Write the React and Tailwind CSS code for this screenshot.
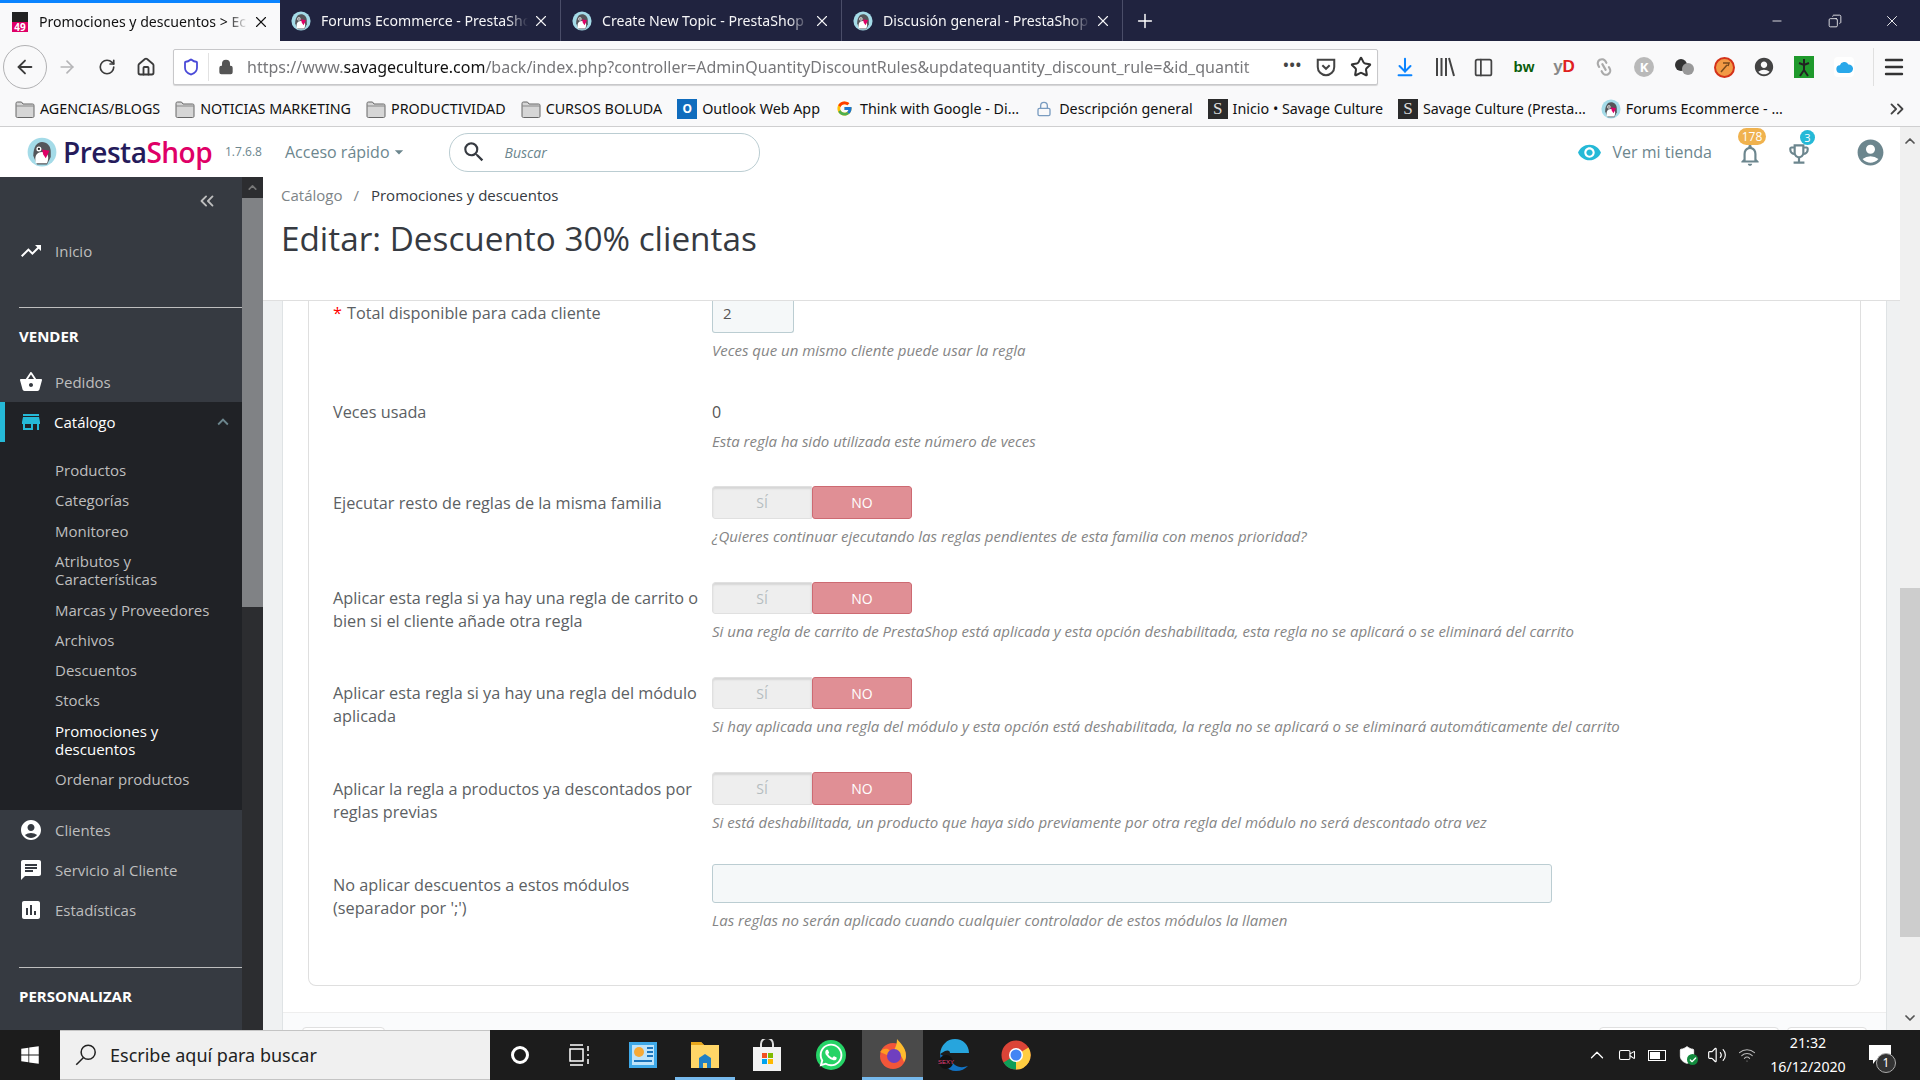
import React from "react";
import {
  ArrowLeft, ArrowRight, RotateCw, Home, Lock, X, Plus, Minus, Copy, Star, ArrowDownToLine,
  PanelLeft, Menu, ChevronsRight, ChevronsLeft, ChevronUp, ChevronDown, Link2, Volume2, Wifi, Video, Shield, Check,
} from "lucide-react";
import {
  MdTrendingUp, MdShoppingBasket, MdStore, MdAccountCircle, MdChat, MdAssessment,
  MdVisibility, MdSearch, MdArrowDropDown, MdNotificationsNone, MdOutlineEmojiEvents, MdExpandLess,
} from "react-icons/md";
import { FcGoogle } from "react-icons/fc";
import { FaWhatsapp, FaWindows } from "react-icons/fa";

const Puffin = ({ size = 20 }) => (
  <svg width={size} height={size} viewBox="0 0 24 24" className="shrink-0">
    <circle cx="12" cy="12" r="11.5" fill="#a4dbe8" />
    <path d="M5 15c0-7 3-11 7-11s7 3 7 8v4l-3 6H8z" fill="#54565a" />
    <path d="M7 21c-1-5 0-9 5-9s6 4 4 9z" fill="#fff" />
    <path d="M12 10l6 1-3 6-2-3z" fill="#df0067" />
    <circle cx="9.5" cy="9.5" r="2" fill="#fff" />
    <circle cx="9.5" cy="9.5" r="0.9" fill="#222" />
  </svg>
);

const Tab = ({ title, active, icon }) => (
  <div
    className={
      active
        ? "w-[280px] h-[41px] shrink-0 bg-[#f9f9fa] border-t-[3px] border-[#0a84ff] flex items-center pl-[12px] pr-[10px] text-[#111]"
        : "w-[281px] h-[41px] shrink-0 border-r border-[#4a4d68] flex items-center pl-[11px] pr-[10px] text-[#f5f5f7]"
    }
  >
    {icon}
    <span className={`${active ? "ml-[11px]" : "ml-[10px]"} flex-1 whitespace-nowrap overflow-hidden text-[14.1px] [mask-image:linear-gradient(to_right,black_90%,transparent)]`}>
      {title}
    </span>
    <X size={18} strokeWidth={1.5} className="ml-[4px] shrink-0" />
  </div>
);

const SavageIcon = () => (
  <span className="w-[20px] h-[20px] bg-[#2b2b2b] text-[#ddd] font-['Liberation_Serif',serif] text-[17px] leading-[20px] text-center shrink-0">S</span>
);

const Folder = () => (
  <svg width="20" height="18" viewBox="0 0 20 18" className="shrink-0">
    <path d="M1 3.5C1 2.5 1.5 2 2.5 2h4L8 4h9.5c1 0 1.5.5 1.5 1.5V16c0 1-.5 1.5-1.5 1.5h-15C1.500 17.500 1 17 1 16z" fill="#d6d6d6" stroke="#666" />
    <path d="M1 6h18" stroke="#888" />
  </svg>
);

const Bookmark = ({ icon, label }) => (
  <div className="flex items-center gap-[5px] text-[14.3px] text-[#111] whitespace-nowrap">
    <span className="w-[20px] flex justify-center shrink-0">{icon}</span>
    <span>{label}</span>
  </div>
);

const Toolbar = () => (
  <div className="h-[50px] shrink-0 bg-[#f9f9fa] flex items-center pt-[2px]">
    <div className="w-[44px] h-[44px] ml-[3px] rounded-full border border-[#b1b1b3] bg-[#f9f9fa] flex items-center justify-center shrink-0">
      <ArrowLeft size={22} className="text-[#3b3b3b]" strokeWidth={2} />
    </div>
    <div className="w-[40px] flex justify-center shrink-0">
      <ArrowRight size={20} className="text-[#b5b5b7]" />
    </div>
    <div className="w-[40px] flex justify-center shrink-0">
      <RotateCw size={18} className="text-[#3b3b3b]" strokeWidth={2.2} />
    </div>
    <div className="w-[38px] flex justify-center shrink-0">
      <Home size={20} className="text-[#3b3b3b]" strokeWidth={2.2} />
    </div>
    <div className="w-[1205px] ml-[8px] h-[36px] shrink-0 bg-white border border-[#c8c8ca] rounded-[2px] flex items-center shadow-[0_1px_1px_rgba(0,0,0,0.15)]">
      <div className="w-[35px] h-[28px] border-r border-[#e2e2e2] flex items-center justify-center shrink-0">
        <Shield size={18} className="text-[#4a4ad8]" strokeWidth={2.4} />
      </div>
      <Lock size={16} className="ml-[9px] text-[#555] shrink-0" fill="#555" />
      <div className="ml-[13px] flex-1 whitespace-nowrap overflow-hidden text-[16px] text-[#77777a] [mask-image:linear-gradient(to_right,black_97%,transparent)]">
        https://www.<span className="text-[#111]">savageculture.com</span>/back/index.php?controller=AdminQuantityDiscountRules&updatequantity_discount_rule=&id_quantit
      </div>
      <span className="ml-[8px] text-[#444] text-[14px] font-bold tracking-[1px] shrink-0 -mt-[6px]">•••</span>
      <svg width="22" height="22" viewBox="0 0 24 24" className="ml-[13px] shrink-0" fill="none" stroke="#444" strokeWidth="2.2">
        <path d="M3 4h18v8a9 9 0 0 1-18 0z" />
        <path d="M8 10l4 4 4-4" />
      </svg>
      <Star size={22} className="ml-[13px] mr-[5px] text-[#333] shrink-0" strokeWidth={2.2} />
    </div>
    <div className="flex items-center ml-[15px]">
      <ArrowDownToLine size={22} className="text-[#0a84ff] w-[24px]" strokeWidth={2.2} />
      <span className="w-[40px] ml-[8px] flex justify-center">
        <svg width="22" height="20" viewBox="0 0 22 20" stroke="#444" strokeWidth="2" fill="none"><path d="M3 1v18M7.500 1v18M12 1v18M15 1l5 18" /></svg>
      </span>
      <span className="w-[42px] -ml-[3px] flex justify-center"><PanelLeft size={21} className="text-[#444]" strokeWidth={2} /></span>
      <span className="w-[40px] text-center font-bold text-[#0b5d0b] text-[15px] font-['Liberation_Sans',sans-serif]">bw</span>
      <span className="w-[40px] text-center font-bold text-[17px] font-['Liberation_Sans',sans-serif]"><span className="text-[#888]">y</span><span className="text-[#e02020]">D</span></span>
      <span className="w-[40px] flex justify-center"><Link2 size={20} className="text-[#aaa] rotate-[60deg]" strokeWidth={2.6} /></span>
      <span className="w-[40px] flex justify-center"><span className="w-[20px] h-[20px] rounded-full bg-[#b9b9b9] text-white font-bold text-[13px] leading-[20px] text-center">K</span></span>
      <span className="w-[40px] flex justify-center">
        <svg width="22" height="22" viewBox="0 0 22 22"><circle cx="8" cy="9" r="6" fill="#333" /><circle cx="15" cy="13" r="6" fill="#999" /></svg>
      </span>
      <span className="w-[40px] flex justify-center">
        <span className="w-[21px] h-[21px] rounded-full bg-[#f29a45] border-2 border-[#d4321a] flex items-center justify-center">
          <svg width="13" height="13" viewBox="0 0 13 13" stroke="#7a4a1c" strokeWidth="1.5" fill="none"><path d="M3 11l6-7M5 2h6l-1 3" /></svg>
        </span>
      </span>
      <span className="w-[40px] flex justify-center"><MdAccountCircle size={22} className="text-[#444]" /></span>
      <span className="w-[40px] flex justify-center">
        <svg width="20" height="22" viewBox="0 0 20 22"><rect width="20" height="22" fill="#1f9a2c" /><path d="M10 3v12M5 7l5 2 5-2M6 20l4-6 4 6" stroke="#222" strokeWidth="2" fill="none" /></svg>
      </span>
      <span className="w-[40px] flex justify-center">
        <span className="w-[20px] h-[20px] bg-white rounded-[4px] flex items-center justify-center">
          <svg width="17" height="11" viewBox="0 0 22 14"><path d="M6 14a5 5 0 0 1-1-10 6 6 0 0 1 11-1 5.500 5.500 0 0 1 1 11z" fill="#29a8ea" /></svg>
        </span>
      </span>
      <span className="w-[40px] ml-[9px] border-l border-[#e0e0e0] h-[38px] flex items-center justify-center"><Menu size={24} className="text-[#333]" strokeWidth={2.4} /></span>
    </div>
  </div>
);

const Bookmarks = () => (
  <div className="h-[36px] shrink-0 bg-[#f9f9fa] border-b border-[#cfcfd0] flex items-center pl-[15px] pr-[12px]">
    <div className="flex items-center gap-[15px] flex-1">
      <Bookmark icon={<Folder />} label="AGENCIAS/BLOGS" />
      <Bookmark icon={<Folder />} label="NOTICIAS MARKETING" />
      <Bookmark icon={<Folder />} label="PRODUCTIVIDAD" />
      <Bookmark icon={<Folder />} label="CURSOS BOLUDA" />
      <Bookmark
        icon={<span className="w-[20px] h-[20px] bg-[#0f6cbd] text-white text-[12px] font-bold leading-[20px] text-center">O</span>}
        label="Outlook Web App"
      />
      <Bookmark icon={<FcGoogle size={17} />} label="Think with Google - Di..." />
      <Bookmark icon={<Lock size={16} className="text-[#7a9cc0]" />} label="Descripción general" />
      <Bookmark icon={<SavageIcon />} label="Inicio • Savage Culture" />
      <Bookmark icon={<SavageIcon />} label="Savage Culture (Presta..." />
      <Bookmark icon={<Puffin size={20} />} label="Forums Ecommerce - ..." />
    </div>
    <ChevronsRight size={22} className="text-[#444]" strokeWidth={2} />
  </div>
);

const PsHeader = () => (
  <div className="h-[50px] shrink-0 bg-white flex items-center font-['Open_Sans',sans-serif] pl-[27px]">
    <Puffin size={30} />
    <span className="ml-[6px] text-[28px] font-semibold tracking-[-0.5px] leading-none font-['Open_Sans',sans-serif] w-[155px] whitespace-nowrap">
      <span className="text-[#251b5b]">Presta</span><span className="text-[#df0067]">Shop</span>
    </span>
    <span className="ml-[7px] w-[60px] text-[12px] text-[#6c868e]">1.7.6.8</span>
    <span className="text-[16px] text-[#6c868e] whitespace-nowrap">Acceso rápido</span>
    <MdArrowDropDown size={20} className="text-[#6c868e] -ml-[1px]" />
    <div className="ml-[40px] w-[311px] h-[39px] border border-[#bbcdd2] rounded-[19px] flex items-center pl-[11px]">
      <MdSearch size={26} className="text-[#363a41]" />
      <span className="ml-[18px] text-[14px] italic text-[#6c868e]">Buscar</span>
    </div>
    <div className="flex-1" />
    <MdVisibility size={25} className="text-[#25b9d7]" />
    <span className="ml-[11px] text-[16px] text-[#6c868e] whitespace-nowrap">Ver mi tienda</span>
    <div className="relative ml-[23px] w-[30px] flex justify-center">
      <MdNotificationsNone size={26} className="text-[#6c868e] mt-[6px]" />
      <span className="absolute -top-[8px] left-[3px] w-[28px] h-[17px] rounded-full bg-[#f0b24e] text-white text-[12px] leading-[17px] text-center">178</span>
    </div>
    <div className="relative ml-[19px] w-[30px] flex justify-center">
      <MdOutlineEmojiEvents size={26} className="text-[#6c868e] mt-[4px]" />
      <span className="absolute -top-[7px] left-[16px] w-[15px] h-[15px] rounded-full bg-[#25b9d7] text-white text-[11px] leading-[15px] text-center">3</span>
    </div>
    <MdAccountCircle size={31} className="ml-[41px] text-[#6c868e]" />
    <div className="w-[20px] ml-[14px] h-[50px] bg-[#f0f0f0] shrink-0 flex justify-center pt-[6px]">
      <ChevronUp size={16} className="text-[#555]" strokeWidth={2.6} />
    </div>
  </div>
);

const NavItem = ({ Icon, label, h = "h-[40px]" }) => (
  <div className={`${h} flex items-center pl-[19px]`}>
    <Icon size={24} className="text-white shrink-0" />
    <span className="ml-[12px] text-[15px] text-[#bebebe]">{label}</span>
  </div>
);

const SubItem = ({ children, active, h = "h-[30.3px]" }) => (
  <div className={`${h} flex items-center pl-[55px] text-[15px] leading-[18px] ${active ? "text-white" : "text-[#bebebe]"}`}>
    <span>{children}</span>
  </div>
);

const Sidebar = () => (
  <div className="w-[263px] shrink-0 flex bg-[#363a41] font-['Open_Sans',sans-serif] overflow-hidden">
    <div className="w-[242px] shrink-0 flex flex-col">
      <div className="h-[49px] flex justify-end items-center pr-[24px] pb-[1px]">
        <ChevronsLeft size={22} className="text-[#bebebe]" strokeWidth={2} />
      </div>
      <div className="h-[50px] flex items-center pl-[19px]">
        <MdTrendingUp size={24} className="text-white shrink-0" />
        <span className="ml-[12px] text-[15px] text-[#bebebe]">Inicio</span>
      </div>
      <div className="mt-[31px] ml-[19px] h-px bg-[#bebebe] shrink-0" />
      <div className="h-[30px] mt-[13px] pl-[19px] flex items-center text-[15px] font-bold text-white">VENDER</div>
      <div className="mt-[11px]"><NavItem Icon={MdShoppingBasket} label="Pedidos" h="h-[40px]" /></div>
      <div className="bg-[#202226] h-[408px] shrink-0 flex flex-col">
        <div className="h-[40px] border-l-[5px] border-[#25b9d7] flex items-center pl-[14px] shrink-0">
          <MdStore size={24} className="text-[#25b9d7] shrink-0" />
          <span className="ml-[11px] text-[15px] text-white flex-1">Catálogo</span>
          <MdExpandLess size={22} className="text-[#6c868e] mr-[8px]" />
        </div>
        <div className="h-[13px] shrink-0" />
        <SubItem>Productos</SubItem>
        <SubItem>Categorías</SubItem>
        <SubItem>Monitoreo</SubItem>
        <SubItem h="h-[48.5px]">Atributos y<br />Características</SubItem>
        <SubItem>Marcas y Proveedores</SubItem>
        <SubItem>Archivos</SubItem>
        <SubItem>Descuentos</SubItem>
        <SubItem>Stocks</SubItem>
        <SubItem active h="h-[48.5px]">Promociones y<br />descuentos</SubItem>
        <SubItem>Ordenar productos</SubItem>
      </div>
      <NavItem Icon={MdAccountCircle} label="Clientes" />
      <NavItem Icon={MdChat} label="Servicio al Cliente" />
      <NavItem Icon={MdAssessment} label="Estadísticas" />
      <div className="mt-[37px] ml-[19px] h-px bg-[#bebebe] shrink-0" />
      <div className="h-[30px] mt-[13px] pl-[19px] flex items-center text-[15px] font-bold text-white">PERSONALIZAR</div>
    </div>
    <div className="w-[21px] bg-[#2c2d30] flex flex-col shrink-0">
      <div className="h-[21px] flex items-center justify-center"><ChevronUp size={13} className="text-[#777]" strokeWidth={3} /></div>
      <div className="h-[409px] bg-[#808285]" />
    </div>
  </div>
);

const Help = ({ children }) => (
  <div className="mt-[8px] h-[18px] text-[15px] leading-[18px] italic text-[#858585] whitespace-nowrap">
    {children}
  </div>
);

const Toggle = ({ h = "h-[33px]" }) => (
  <div className={`${h} w-[200px] flex text-[14px] rounded-[3px] overflow-hidden`}>
    <div className="w-[100px] bg-[#eeeeee] border border-[#e0e0e0] rounded-l-[3px] text-[#b5bdc0] flex items-center justify-center shadow-[inset_0_2px_2px_rgba(0,0,0,0.1)]">SÍ</div>
    <div className="w-[100px] bg-[#e08f95] border border-[#cd6a72] rounded-[3px] text-white flex items-center justify-center">NO</div>
  </div>
);

const Row = ({ mt, pt = "pt-[5px]", label, children }) => (
  <div className={`flex ${mt}`}>
    <div className={`w-[379px] pr-[5px] shrink-0 text-[16.25px] leading-[23px] text-[#5c5f64] ${pt}`}>{label}</div>
    <div className="flex-1">{children}</div>
  </div>
);

const FormCard = () => (
  <div className="flex-1 min-h-0 flex flex-col bg-[#eff1f2] pl-[19px] pr-[13px] overflow-hidden font-['Open_Sans',sans-serif]">
    <div className="bg-white border-l border-r border-[#dfe3e5] flex-1 flex flex-col">
      <div className="ml-[25px] mr-[25px] bg-white border-b border-l border-r border-[#dfdfdf] rounded-b-[8px] pl-[24px] pb-[56px]">
        <Row
          mt=""
          pt="pt-px"
          label={<><span className="text-[#ff0000] mr-[5px]">*</span>Total disponible para cada cliente</>}
        >
          <div className="w-[82px] h-[32px] bg-[#f5f8f9] border border-t-0 border-[#bbcdd2] rounded-b-[3px] pl-[10px] text-[15px] leading-[24px] text-[#555]">2</div>
          <Help>Veces que un mismo cliente puede usar la regla</Help>
        </Row>
        <Row mt="mt-[41px]" pt="pt-px" label="Veces usada">
          <div className="h-[24px] text-[16px] leading-[24px] text-[#555]">0</div>
          <Help>Esta regla ha sido utilizada este número de veces</Help>
        </Row>
        <Row mt="mt-[36px]" pt="pt-[6px]" label="Ejecutar resto de reglas de la misma familia">
          <Toggle />
          <Help>¿Quieres continuar ejecutando las reglas pendientes de esta familia con menos prioridad?</Help>
        </Row>
        <Row mt="mt-[37px]" label="Aplicar esta regla si ya hay una regla de carrito o bien si el cliente añade otra regla">
          <Toggle h="h-[32px]" />
          <Help>Si una regla de carrito de PrestaShop está aplicada y esta opción deshabilitada, esta regla no se aplicará o se eliminará del carrito</Help>
        </Row>
        <Row mt="mt-[37px]" label="Aplicar esta regla si ya hay una regla del módulo aplicada">
          <Toggle h="h-[32px]" />
          <Help>Si hay aplicada una regla del módulo y esta opción está deshabilitada, la regla no se aplicará o se eliminará automáticamente del carrito</Help>
        </Row>
        <Row mt="mt-[37px]" pt="pt-[6px]" label="Aplicar la regla a productos ya descontados por reglas previas">
          <Toggle />
          <Help>Si está deshabilitada, un producto que haya sido previamente por otra regla del módulo no será descontado otra vez</Help>
        </Row>
        <Row mt="mt-[33px]" pt="pt-[10px]" label="No aplicar descuentos a estos módulos (separador por ';')">
          <div className="w-[840px] h-[39px] bg-[#f5f8f9] border border-[#bbcdd2] rounded-[3px]" />
          <Help>Las reglas no serán aplicado cuando cualquier controlador de estos módulos la llamen</Help>
        </Row>
      </div>
      <div className="mt-[26px] flex-1 bg-[#fafbfc] border-t border-[#eeeeee] pt-[14px] pl-[19px] pr-[19px] flex">
        <div className="w-[83px] h-[20px] bg-white border border-[#e0e0e0] rounded-t-[4px]" />
        <div className="flex-1" />
        <div className="w-[180px] h-[20px] bg-white border border-[#e0e0e0] rounded-t-[4px]" />
        <div className="w-[80px] ml-[8px] h-[20px] bg-white border border-[#e0e0e0] rounded-t-[4px]" />
      </div>
    </div>
  </div>
);

const PageScrollbar = () => (
  <div className="w-[20px] shrink-0 bg-[#f0f0f0] flex flex-col items-center relative">
    <div className="h-[411px] shrink-0" />
    <div className="w-full h-[349px] bg-[#cdcdcd] shrink-0" />
    <div className="flex-1" />
    <ChevronDown size={16} className="text-[#555] mb-[4px]" strokeWidth={2.6} />
  </div>
);

const Main = () => (
  <div className="flex-1 min-w-0 flex flex-col">
    <div className="h-[124px] shrink-0 bg-white border-b border-[#dfdfdf] pl-[18px] font-['Open_Sans',sans-serif]">
      <div className="mt-[8px] h-[20px] text-[15px] leading-[20px] flex text-[#7d8487]">
        <span>Catálogo</span>
        <span className="ml-[11px]">/</span>
        <span className="ml-[12px] text-[#363a41]">Promociones y descuentos</span>
      </div>
      <div className="mt-[11px] text-[33.3px] leading-[44px] text-[#363a41] whitespace-nowrap">Editar: Descuento 30% clientas</div>
    </div>
    <FormCard />
  </div>
);

const TaskIcon = ({ children, w = "w-[61px]", cls = "" }) => (
  <div className={`${w} h-[50px] flex items-center justify-center shrink-0 ${cls}`}>{children}</div>
);

const Taskbar = () => (
  <div className="h-[50px] shrink-0 bg-[#1c1c1c] flex items-center font-['Noto_Sans',sans-serif] text-white relative">
    <div className="w-[60px] flex justify-center shrink-0"><FaWindows size={20} /></div>
    <div className="w-[430px] h-[50px] shrink-0 bg-[#f0f0f0] border-t border-b border-[#c4c4c4] flex items-center pl-[13px] text-[#222]">
      <svg width="26" height="26" viewBox="0 0 24 24" fill="none" stroke="#222" strokeWidth="1.4" className="shrink-0">
        <circle cx="14" cy="9.500" r="6.500" />
        <path d="M9.500 14.500L3 21" />
      </svg>
      <span className="ml-[11px] text-[18px] whitespace-nowrap">Escribe aquí para buscar</span>
    </div>
    <TaskIcon w="w-[60px]"><span className="w-[18px] h-[18px] rounded-full border-[3px] border-white" /></TaskIcon>
    <TaskIcon w="w-[60px]">
      <svg width="22" height="24" viewBox="0 0 22 24" stroke="#fff" fill="none" strokeWidth="1.500"><rect x="1" y="6" width="13" height="12" /><path d="M1 2h13M1 22h13M19 3v5M19 11v2M19 16v5" /></svg>
    </TaskIcon>
    <TaskIcon w="w-[64px]" cls="ml-px">
      <svg width="28" height="26" viewBox="0 0 28 26"><rect width="28" height="26" fill="#3fa9e8" /><rect x="3" y="3" width="22" height="20" fill="#bfe4fa" /><circle cx="10" cy="10" r="5" fill="#f7a935" /><path d="M18 6h6M18 10h6M18 14h6M5 19h18" stroke="#1c75bc" strokeWidth="2" /></svg>
    </TaskIcon>
    <TaskIcon w="w-[60px]" cls="border-b-[3px] border-[#76b9ed] pt-[3px]">
      <svg width="28" height="30" viewBox="0 0 28 30"><path d="M0 2h10l3 3h15v23H0z" fill="#ffd667" /><path d="M0 2h10l3 3H0z" fill="#e7a61b" /><path d="M8 28V18l6-4 6 4v10h-4v-5h-4v5z" fill="#1f7fc5" /></svg>
    </TaskIcon>
    <TaskIcon w="w-[64px]">
      <svg width="28" height="32" viewBox="0 0 28 32"><path d="M8 9V5a6 6 0 0 1 12 0v4" stroke="#ddd" strokeWidth="2" fill="none" /><rect y="8" width="28" height="24" fill="#f2f2f2" /><rect x="9" y="14" width="5" height="5" fill="#f25022" /><rect x="15" y="14" width="5" height="5" fill="#7fba00" /><rect x="9" y="20" width="5" height="5" fill="#00a4ef" /><rect x="15" y="20" width="5" height="5" fill="#ffb900" /></svg>
    </TaskIcon>
    <TaskIcon w="w-[63px]">
      <span className="w-[30px] h-[30px] rounded-full bg-[#25d366] flex items-center justify-center"><FaWhatsapp size={26} className="text-white" /></span>
    </TaskIcon>
    <TaskIcon w="w-[61px]" cls="bg-[#4a4a4a] border-b-[3px] border-[#76b9ed]">
      <svg width="32" height="32" viewBox="0 0 32 32">
        <circle cx="16" cy="18" r="13" fill="#f2563a" />
        <path d="M20 1c3 4 9 8 9 17 0 2-1 4-2 6-2-6-5-9-10-12 2-3 3-7 3-11z" fill="#ffbd2e" />
        <path d="M3 14c2-3 5-4 8-3l3 3-4 3z" fill="#ff9a22" />
        <circle cx="17" cy="18" r="7" fill="#6f3fc0" />
      </svg>
    </TaskIcon>
    <TaskIcon w="w-[62px]">
      <svg width="32" height="34" viewBox="0 0 32 34">
        <path d="M2 16C3 7 9 1 17 1c8 0 14 6 14 14H12c0-3-3-3-5-2z" fill="#27a5dd" />
        <path d="M2 16c0 9 7 17 16 17 5 0 9-2 12-5-8 3-16 0-17-8-4 0-8-2-11-4z" fill="#1273c4" />
        <circle cx="8" cy="24" r="7" fill="#111" />
        <text x="8" y="26" fontSize="6" textAnchor="middle" fill="#e0407a" fontFamily="Liberation Sans">SEXY</text>
      </svg>
    </TaskIcon>
    <TaskIcon w="w-[62px]">
      <svg width="30" height="30" viewBox="0 0 30 30">
        <circle cx="15" cy="15" r="14.500" fill="#db4437" />
        <path d="M15 15L2.500 22.500A14.500 14.500 0 0 0 15 29.500z" fill="#0f9d58" />
        <path d="M15 15l12.500-7.500A14.500 14.500 0 0 1 15 29.500z" fill="#ffcd40" />
        <circle cx="15" cy="15" r="7" fill="#fff" />
        <circle cx="15" cy="15" r="5.500" fill="#4285f4" />
      </svg>
    </TaskIcon>
    <div className="flex-1" />
    <div className="flex items-center">
      <ChevronUp size={22} strokeWidth={1.4} className="w-[30px]" />
      <span className="w-[30px] flex justify-center"><Video size={18} strokeWidth={1.4} /></span>
      <span className="w-[30px] flex justify-center">
        <span className="w-[18px] h-[11px] border border-white p-[1px] flex"><span className="w-[10px] bg-white" /></span>
      </span>
      <span className="w-[30px] flex justify-center relative">
        <Shield size={20} fill="#fff" strokeWidth={1} />
        <span className="absolute left-[15px] top-[9px] w-[11px] h-[11px] rounded-full bg-[#128a3d] flex items-center justify-center"><Check size={8} strokeWidth={4} /></span>
      </span>
      <span className="w-[30px] flex justify-center"><Volume2 size={20} strokeWidth={1.4} /></span>
      <span className="w-[30px] flex justify-center"><Wifi size={18} strokeWidth={1.4} className="text-[#bbbbbb]" /></span>
    </div>
    <div className="w-[92px] text-center text-[14.2px] leading-[24px]">
      <div>21:32</div>
      <div>16/12/2020</div>
    </div>
    <div className="w-[52px] mr-[14px] flex justify-center relative">
      <svg width="22" height="20" viewBox="0 0 22 20" fill="#fff"><path d="M0 0h22v15H7l-3 4v-4H0z" /></svg>
      <span className="absolute left-[22px] top-[8px] w-[20px] h-[20px] rounded-full border border-[#aaa] bg-[#333] text-[12px] leading-[18px] text-center">1</span>
    </div>
  </div>
);

const App = () => {
  const favicon49 = (
    <span className="w-[16px] h-[20px] bg-[#222] text-[10px] leading-[10px] font-bold text-center text-white flex items-end justify-center shrink-0">
      <span className="bg-[#df0067] w-full">49</span>
    </span>
  );

  return (
    <div className="w-[1920px] h-[1080px] flex flex-col overflow-hidden bg-white font-['Noto_Sans',sans-serif]">
      <div className="h-[41px] shrink-0 bg-[#20233f] flex items-center">
        <Tab active title="Promociones y descuentos > Ec" icon={favicon49} />
        <Tab title="Forums Ecommerce - PrestaSho" icon={<Puffin />} />
        <Tab title="Create New Topic - PrestaShop" icon={<Puffin />} />
        <Tab title="Discusión general - PrestaShop" icon={<Puffin />} />
        <div className="ml-[11px] text-white"><Plus size={22} strokeWidth={1.6} /></div>
        <div className="flex-1" />
        <div className="w-[58px] flex justify-center text-white"><Minus size={14} strokeWidth={1.4} /></div>
        <div className="w-[58px] flex justify-center text-white"><Copy size={14} strokeWidth={1.4} className="-scale-x-100" /></div>
        <div className="w-[56px] flex justify-center text-white"><X size={18} strokeWidth={1.2} /></div>
      </div>
      <Toolbar />
      <Bookmarks />
      <PsHeader />
      <div className="flex-1 min-h-0 flex relative">
        <Sidebar />
        <Main />
        <PageScrollbar />
      </div>
      <Taskbar />
    </div>
  );
};

export default App;
